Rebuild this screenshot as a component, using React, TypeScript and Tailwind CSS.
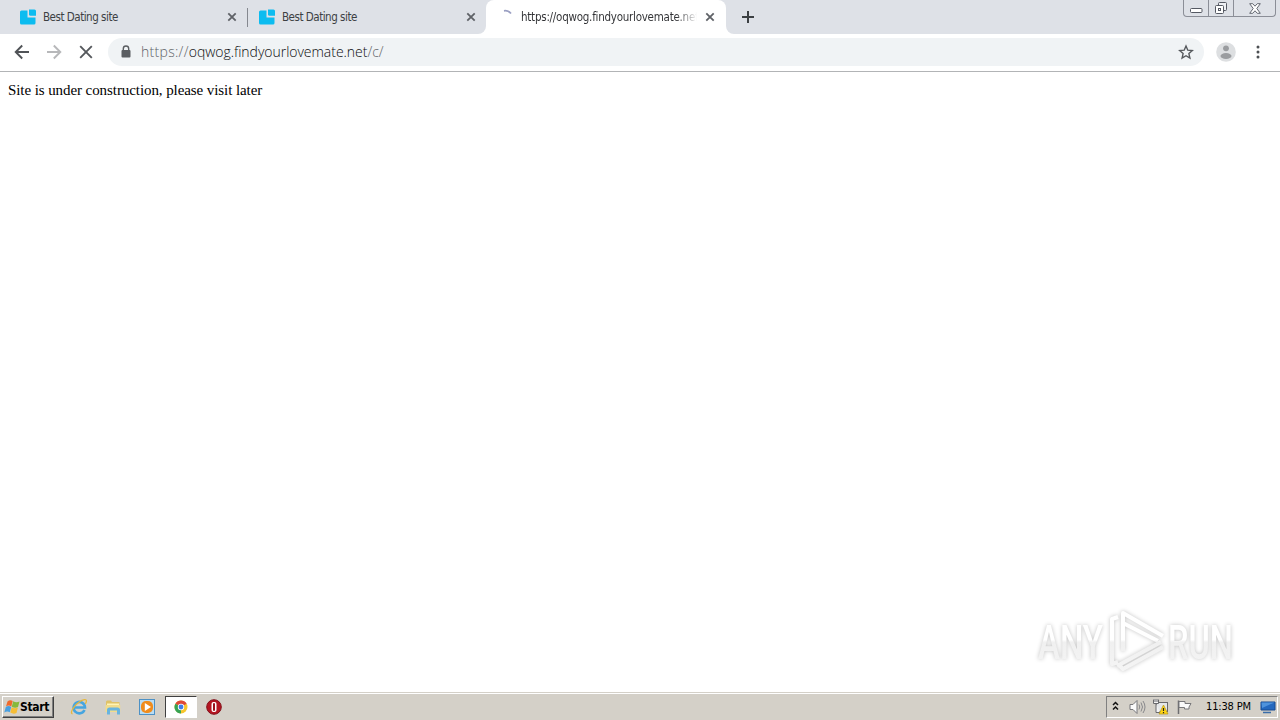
import type { ReactNode } from "react";

function CloseIcon() {
  return (
    <svg width="10" height="10" viewBox="0 0 10 10" className="shrink-0">
      <path d="M1.3 1.3l7.4 7.4M8.7 1.3L1.3 8.7" stroke="#5f6267" strokeWidth="1.8" />
    </svg>
  );
}

function SiteIcon() {
  return (
    <svg width="16" height="16" viewBox="0 0 16 16" className="shrink-0">
      <path d="M1.5 1.500H7.500V8.500H15.500v5.500a1.500 1.500 0 0 1-1.500 1.500H1.500A1.500 1.500 0 0 1 0 14V3a1.500 1.500 0 0 1 1.500-1.500z" fill="#0cbcf0" />
      <path d="M9 0.500h5.500a1.500 1.500 0 0 1 1.500 1.500v4.700h-5.500A1.500 1.500 0 0 1 9 5.200z" fill="#0cbcf0" />
    </svg>
  );
}

function InactiveTab({ title }: { title: string }) {
  return (
    <div className="flex h-full w-[239px] items-center pl-5">
      <SiteIcon />
      <span className="ml-[7px] w-[184px] whitespace-nowrap text-[11.5px] leading-[18px] tracking-[-0.48px] text-[#3c4043]">
        {title}
      </span>
      <CloseIcon />
    </div>
  );
}

function WindowControls() {
  return (
    <div className="mr-1 flex h-[17px] w-[93px] rounded-b-[4px] border border-t-0 border-[#8b8e97]">
      <div className="flex w-[25px] items-center justify-center border-r border-[#8b8e97]">
        <svg width="13" height="6" viewBox="0 0 13 6" className="mt-[5px]">
          <rect x="0.5" y="0.5" width="11.500" height="4" rx="1" fill="#fff" stroke="#555963" />
        </svg>
      </div>
      <div className="flex w-[25px] items-center justify-center border-r border-[#8b8e97]">
        <svg width="14" height="14" viewBox="0 0 14 14">
          <rect x="4.500" y="1.500" width="8" height="8" rx="1" fill="#eef0f4" stroke="#555963" />
          <rect x="1.500" y="4.500" width="8" height="8" rx="1" fill="#fff" stroke="#555963" />
          <rect x="4.500" y="7.500" width="2" height="2" fill="#fff" stroke="#555963" />
        </svg>
      </div>
      <div className="flex flex-1 items-center justify-center">
        <svg width="12" height="11" viewBox="0 0 12 11">
          <path
            d="M0.700 0.700h3L6 3.200 8.300 0.700h3L7.800 5.500l3.500 4.800h-3L6 7.800 3.700 10.300h-3L4.200 5.500z"
            fill="#fff"
            stroke="#555963"
            strokeWidth="0.900"
          />
        </svg>
      </div>
    </div>
  );
}

function TabStrip() {
  return (
    <div className="flex h-[34px] bg-[#dee1e7]">
      <InactiveTab title="Best Dating site" />
      <div className="flex w-[239px] items-center">
        <div className="-mr-px ml-[8px] h-[19px] w-px shrink-0 bg-[#85888f]" />
        <div className="-ml-[8px] h-full">
          <InactiveTab title="Best Dating site" />
        </div>
      </div>
      <div className="flex w-2 items-end bg-white">
        <div className="h-full w-full rounded-br-[8px] bg-[#dee1e7]" />
      </div>
      <div className="flex w-[240px] items-center rounded-t-[8px] bg-white">
        <svg width="16" height="16" viewBox="0 0 16 16" className="ml-3 shrink-0">
          <path d="M6 1.800Q10 1 13 4.500" fill="none" stroke="#9a9fc2" strokeWidth="1.800" />
        </svg>
        <span className="ml-[7px] w-[176px] whitespace-nowrap bg-gradient-to-r from-[#303134] from-88% to-white bg-clip-text text-[11.5px] leading-[18px] tracking-[-0.25px] text-transparent">
          https://oqwog.findyourlovemate.net
        </span>
        <div className="ml-[8px] flex">
          <CloseIcon />
        </div>
      </div>
      <div className="w-2 bg-white">
        <div className="h-full w-full rounded-bl-[8px] bg-[#dee1e7]" />
      </div>
      <div className="flex flex-1 items-center pl-2">
        <svg width="12" height="12" viewBox="0 0 12 12">
          <path d="M6 0v12M0 6h12" stroke="#3c4043" strokeWidth="2" />
        </svg>
      </div>
      <WindowControls />
    </div>
  );
}

function Toolbar() {
  return (
    <div className="flex h-[38px] items-center border-b border-[#b2b4b6] bg-white pb-px">
      <svg width="16" height="16" viewBox="0 0 16 16" className="ml-[14px]">
        <path d="M15 8H2M8.200 1.500L1.700 8l6.500 6.500" fill="none" stroke="#505357" strokeWidth="1.900" />
      </svg>
      <svg width="16" height="16" viewBox="0 0 16 16" className="ml-4">
        <path d="M1 8h13M7.800 1.500L14.300 8l-6.500 6.500" fill="none" stroke="#b7b8ba" strokeWidth="1.900" />
      </svg>
      <svg width="16" height="16" viewBox="0 0 16 16" className="ml-4">
        <path d="M2.200 2.200l11.600 11.600M13.800 2.200L2.200 13.800" stroke="#55585c" strokeWidth="1.900" />
      </svg>
      <div className="ml-[14px] flex h-7 w-[1096px] items-center rounded-full bg-[#f0f3f5] pl-3">
        <svg width="12" height="14" viewBox="0 0 12 14">
          <path d="M3.300 6V3.700a2.700 2.700 0 0 1 5.400 0V6" fill="none" stroke="#5b5e62" strokeWidth="1.400" />
          <rect x="1.500" y="5" width="9" height="7.500" rx="1" fill="#5b5e62" />
        </svg>
        <span className="ml-[9px] flex-1 whitespace-nowrap pb-[2px] font-['Open_Sans',sans-serif] text-[14px] font-light tracking-[-0.03px] text-[#0c0d0f]">
          <span className="tracking-[0.3px] text-[#5f6368]">https://</span>oqwog.findyourlovemate.net
          <span className="text-[#5f6368]">/c/</span>
        </span>
        <svg width="16" height="16" viewBox="0 0 16 16" className="mr-[10px]">
          <path
            d="M8 2l1.800 4.200 4.500.4-3.400 3 1 4.400L8 11.700 4.100 14l1-4.400-3.400-3 4.500-.4z"
            fill="none"
            stroke="#55585c"
            strokeWidth="1.400"
          />
        </svg>
      </div>
      <svg width="20" height="20" viewBox="0 0 20 20" className="ml-3">
        <circle cx="10" cy="10" r="9.800" fill="#dddfe1" />
        <circle cx="10" cy="6.300" r="2.900" fill="#9a9c9f" />
        <ellipse cx="10" cy="14" rx="5.500" ry="3" fill="#9a9c9f" />
      </svg>
      <svg width="4" height="16" viewBox="0 0 4 16" className="ml-5">
        <circle cx="2" cy="3" r="1.500" fill="#4c4f53" />
        <circle cx="2" cy="8" r="1.500" fill="#4c4f53" />
        <circle cx="2" cy="13" r="1.500" fill="#4c4f53" />
      </svg>
    </div>
  );
}

function Watermark() {
  return (
    <svg
      width="210"
      height="76"
      viewBox="1030 603 210 76"
      className="absolute bottom-[13px] left-[1030px] drop-shadow-[0_0_2px_rgba(0,0,0,0.24)]"
    >
      <defs>
        <linearGradient id="mark" x1="0" y1="610" x2="0" y2="672" gradientUnits="userSpaceOnUse">
          <stop offset="0.480" stopColor="#ffffff" />
          <stop offset="0.520" stopColor="#f0f0f0" />
          <stop offset="1" stopColor="#f5f5f5" />
        </linearGradient>
      </defs>
      <g fill="url(#mark)" className="font-['Roboto',sans-serif] text-[49px] font-medium">
        <text x="1038" y="659" textLength="65" lengthAdjust="spacingAndGlyphs">ANY</text>
        <text x="1168" y="659" textLength="65" lengthAdjust="spacingAndGlyphs">RUN</text>
      </g>
      <g fill="none" stroke="url(#mark)" strokeWidth="4" strokeLinejoin="round">
        <path d="M1123 651v-38l40 23" />
        <path d="M1118 617l-6 2v45l6-2" />
        <path d="M1123 623l35 18" />
        <path d="M1161 642l-44 24M1163 647l-40 22-3-3" />
      </g>
    </svg>
  );
}

function StartFlag() {
  return (
    <svg width="16" height="16" viewBox="0 0 16 16">
      <path d="M3.500 2.500Q6 0.500 8.700 2L7.300 7.400Q4.500 5.700 2 7.500z" fill="#ef6a2c" />
      <path d="M9.200 2.200q3 1.800 6.300.3L14 8q-3 1.500-6.200-.3z" fill="#86b93c" />
      <path d="M1.800 8Q4.500 6.300 7.200 7.900L5.800 13.200Q3 11.700.3 13.500z" fill="#489fe0" />
      <path d="M7.700 8.200q3 1.800 6.200.3L12.500 14q-3 1.500-6.200-.5z" fill="#f6bd35" />
    </svg>
  );
}

function ExplorerIcon() {
  return (
    <svg width="18" height="18" viewBox="0 0 18 18">
      <path
        d="M14.500 12A5.700 5.700 0 1 1 15 9.500H5"
        fill="none"
        stroke="#46a5e0"
        strokeWidth="2.600"
      />
      <path d="M2.500 15.800C-1.500 15 7 3 14.500 1.600c3-.5 1.800 3 .8 4.200" fill="none" stroke="#e6b73c" strokeWidth="1.300" />
    </svg>
  );
}

function FolderIcon() {
  return (
    <svg width="18" height="18" viewBox="0 0 18 18">
      <path d="M2 3.500l1-1h4l1 1.500h7.500V14H2z" fill="#dfc268" />
      <path d="M3 5.500h12v4H3z" fill="#fff4b5" />
      <path d="M1.500 7h14.700v7H1.500z" fill="#f1dc8c" />
      <path d="M3 16.500V12q0-2.500 2.500-2.500h8q2.500 0 2.500 2.500v4.500h-3v-4H6v4z" fill="#68b4df" />
    </svg>
  );
}

function PlayerIcon() {
  return (
    <svg width="16" height="16" viewBox="0 0 16 16">
      <rect x="0.500" y="0.500" width="15" height="15" fill="#b9ddf4" stroke="#4d91c5" />
      <rect x="2" y="2" width="12" height="12" rx="5" fill="#f08c1c" />
      <path d="M5.800 4L12 8l-6.200 4z" fill="#fff" />
    </svg>
  );
}

function ChromeIcon() {
  return (
    <svg width="14" height="14" viewBox="0 0 14 14">
      <circle cx="7" cy="7" r="6.500" fill="#f7c62d" />
      <path d="M7 7L1.370 3.750A6.500 6.500 0 0 1 12.630 3.750z" fill="#df4938" />
      <path d="M7 7L1.370 3.750A6.500 6.500 0 0 0 7 13.500z" fill="#36a354" />
      <circle cx="7" cy="7" r="3.200" fill="#fff" />
      <circle cx="7" cy="7" r="2.400" fill="#3f7de8" />
    </svg>
  );
}

function OperaIcon() {
  return (
    <svg width="16" height="16" viewBox="0 0 16 16">
      <circle cx="8" cy="8" r="7.300" fill="#b51521" stroke="#82101a" />
      <rect x="5.500" y="3" width="5" height="10" rx="2" fill="#fff" />
      <rect x="7" y="4" width="2" height="8" rx="1" fill="#9d101b" />
    </svg>
  );
}

function SystemTray() {
  return (
    <div className="ml-auto mr-[2px] mt-[3px] flex h-[22px] w-[172px] items-center border border-b-white border-l-[#808080] border-r-white border-t-[#808080] pl-[5px]">
      <svg width="7" height="10" viewBox="0 0 7 10" className="-mt-[2px]">
        <path d="M1 4l2.500-2.500L6 4M1 8.500L3.500 6 6 8.500" fill="none" stroke="#111" strokeWidth="1.500" />
      </svg>
      <svg width="17" height="16" viewBox="0 0 17 16" className="ml-[10px]">
        <path d="M1 5.500h3l4-4v13l-4-4H1z" fill="#fafafa" stroke="#77777a" />
        <path d="M10 5.500q1.500 2.500 0 5M12 3.500q3 4.500 0 9M14 2q4 6 0 12" fill="none" stroke="#88888b" />
      </svg>
      <svg width="17" height="16" viewBox="0 0 17 16" className="ml-[6px]">
        <rect x="4.500" y="3.500" width="11" height="9" fill="#e5e7e9" stroke="#69696c" />
        <path d="M1.500 0.500v4h5v-4M3 0v3M5 0v3M4 4.500v9h4" fill="#f4f4f4" stroke="#69696c" />
        <path d="M11.500 6l4.500 9H7z" fill="#ffd514" stroke="#b69516" strokeWidth="0.700" />
        <path d="M11.500 9v3M11.500 13v1.200" stroke="#222" strokeWidth="1.200" />
      </svg>
      <svg width="17" height="16" viewBox="0 0 17 16" className="ml-[7px]">
        <path d="M2.500 1.500V15" stroke="#6d6d70" strokeWidth="1.500" />
        <path d="M3 2.500h6v2h6l-2 3.500v2H8.500V8.500H3z" fill="#fafafa" stroke="#77777a" />
      </svg>
      <span className="ml-[13px] w-[54px] whitespace-nowrap text-[11px] tracking-[-0.15px] text-black">11:38 PM</span>
      <svg width="16" height="14" viewBox="0 0 16 14">
        <path d="M1 2h14v8H1z" fill="#2468be" stroke="#174b92" />
        <path d="M1.500 2.500h13L2 8z" fill="#4f93dc" />
        <path d="M3 12.500h8" stroke="#396da9" strokeWidth="1.500" />
      </svg>
    </div>
  );
}

function LaunchButton({ children }: { children: ReactNode }) {
  return <div className="flex w-[34px] items-center justify-center">{children}</div>;
}

function Taskbar() {
  return (
    <div className="flex h-7 border-t border-[#d4d0c8] bg-[#d4d0c8] shadow-[inset_0_1px_0_#fff]">
      <div className="ml-[2px] mt-[3px] flex h-[22px] w-[52px] items-center border border-b-[#404040] border-l-white border-r-[#404040] border-t-white pl-px shadow-[inset_-1px_-1px_0_#808080]">
        <StartFlag />
        <span className="whitespace-nowrap text-[12px] font-bold tracking-[-0.3px] text-black">Start</span>
      </div>
      <div className="ml-[8px] mt-[3px] flex h-[22px]">
        <LaunchButton>
          <ExplorerIcon />
        </LaunchButton>
        <LaunchButton>
          <FolderIcon />
        </LaunchButton>
        <LaunchButton>
          <PlayerIcon />
        </LaunchButton>
        <div className="ml-px flex w-8 items-center justify-center border border-b-white border-l-[#404040] border-r-white border-t-[#404040] bg-white">
          <ChromeIcon />
        </div>
        <LaunchButton>
          <OperaIcon />
        </LaunchButton>
      </div>
      <SystemTray />
    </div>
  );
}

export default function App() {
  return (
    <div className="flex h-[720px] w-[1280px] flex-col overflow-hidden bg-white font-['DejaVu_Sans_Condensed','DejaVu_Sans',sans-serif]">
      <TabStrip />
      <Toolbar />
      <main className="relative flex-1 px-2 pt-2">
        <p className="font-['Liberation_Serif',serif] text-[15px] leading-5 tracking-[-0.08px] text-black">
          Site is under construction, please visit later
        </p>
        <Watermark />
      </main>
      <Taskbar />
    </div>
  );
}
